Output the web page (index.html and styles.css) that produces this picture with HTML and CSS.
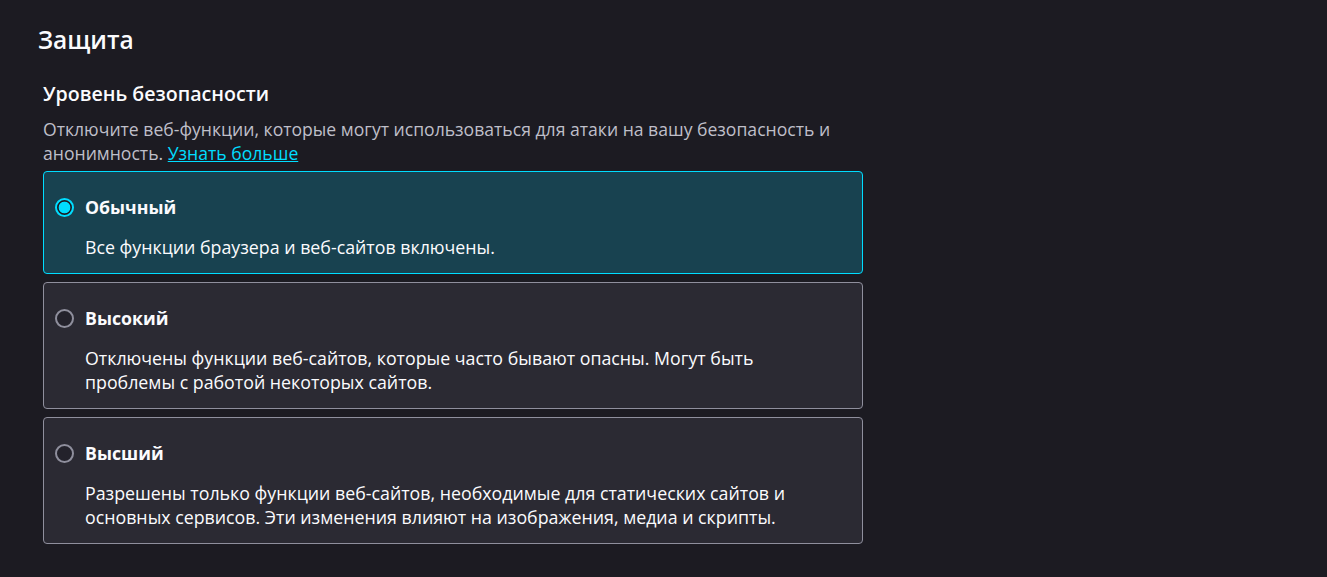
FILE: index.html
```html
<!DOCTYPE html>
<html lang="ru">
<head>
<meta charset="utf-8">
<title>Защита</title>
<link rel="stylesheet" href="styles.css">
</head>
<body>
<main class="page">
  <h1 class="title">Защита</h1>
  <section class="section">
    <h2 class="section-title">Уровень безопасности</h2>
    <p class="section-desc">Отключите веб-функции, которые могут использоваться для атаки на вашу безопасность и анонимность. <a class="link" href="#">Узнать больше</a></p>
    <div class="options">
      <label class="option option-selected">
        <div class="option-head">
          <span class="radio radio-checked"></span>
          <span class="option-label">Обычный</span>
        </div>
        <p class="option-desc">Все функции браузера и веб-сайтов включены.</p>
      </label>
      <label class="option">
        <div class="option-head">
          <span class="radio"></span>
          <span class="option-label">Высокий</span>
        </div>
        <p class="option-desc">Отключены функции веб-сайтов, которые часто бывают опасны. Могут быть<br>проблемы с работой некоторых сайтов.</p>
      </label>
      <label class="option">
        <div class="option-head">
          <span class="radio"></span>
          <span class="option-label">Высший</span>
        </div>
        <p class="option-desc">Разрешены только функции веб-сайтов, необходимые для статических сайтов и<br>основных сервисов. Эти изменения влияют на изображения, медиа и скрипты.</p>
      </label>
    </div>
  </section>
</main>
</body>
</html>
```
FILE: styles.css
```css
html, body {
  margin: 0;
  padding: 0;
}
body {
  background: #1c1b22;
  color: #fbfbfe;
  font-family: "Open Sans", "Noto Sans", sans-serif;
  width: 1327px;
  height: 577px;
  overflow: hidden;
}
.page {
  padding: 24px 0 0 38px;
}
.title {
  margin: 0;
  font-size: 24.5px;
  line-height: 32px;
  font-weight: 600;
}
.section {
  margin: 26px 0 0 5px;
  width: 820px;
}
.section-title {
  margin: 0;
  font-size: 19.6px;
  line-height: 24px;
  font-weight: 600;
}
.section-desc {
  margin: 11px 0 0 0;
  font-size: 17.6px;
  line-height: 24px;
  color: #bfbfc9;
}
.link {
  color: #00ddff;
  text-decoration: underline;
}
.options {
  margin-top: 6px;
  display: flex;
  flex-direction: column;
  gap: 8px;
}
.option {
  display: block;
  box-sizing: border-box;
  border: 1px solid #8f8f9d;
  border-radius: 4px;
  background: #2b2a33;
  padding: 24px 11px 14px 11px;
}
.option-selected {
  border-color: #00ddff;
  background: #184250;
}
.option-head {
  display: flex;
  align-items: center;
  gap: 11px;
  height: 22px;
}
.radio {
  box-sizing: border-box;
  width: 19px;
  height: 19px;
  border-radius: 50%;
  border: 2px solid #8f8f9d;
  background: #23222b;
  flex: none;
}
.radio-checked {
  border-color: #00ddff;
  background: radial-gradient(circle, #00ddff 0 5.5px, #1c1b22 6.2px);
}
.option-label {
  font-size: 17.7px;
  font-weight: 700;
  line-height: 22px;
}
.option-desc {
  margin: 17px 0 0 30px;
  font-size: 17.8px;
  line-height: 24px;
}
```
